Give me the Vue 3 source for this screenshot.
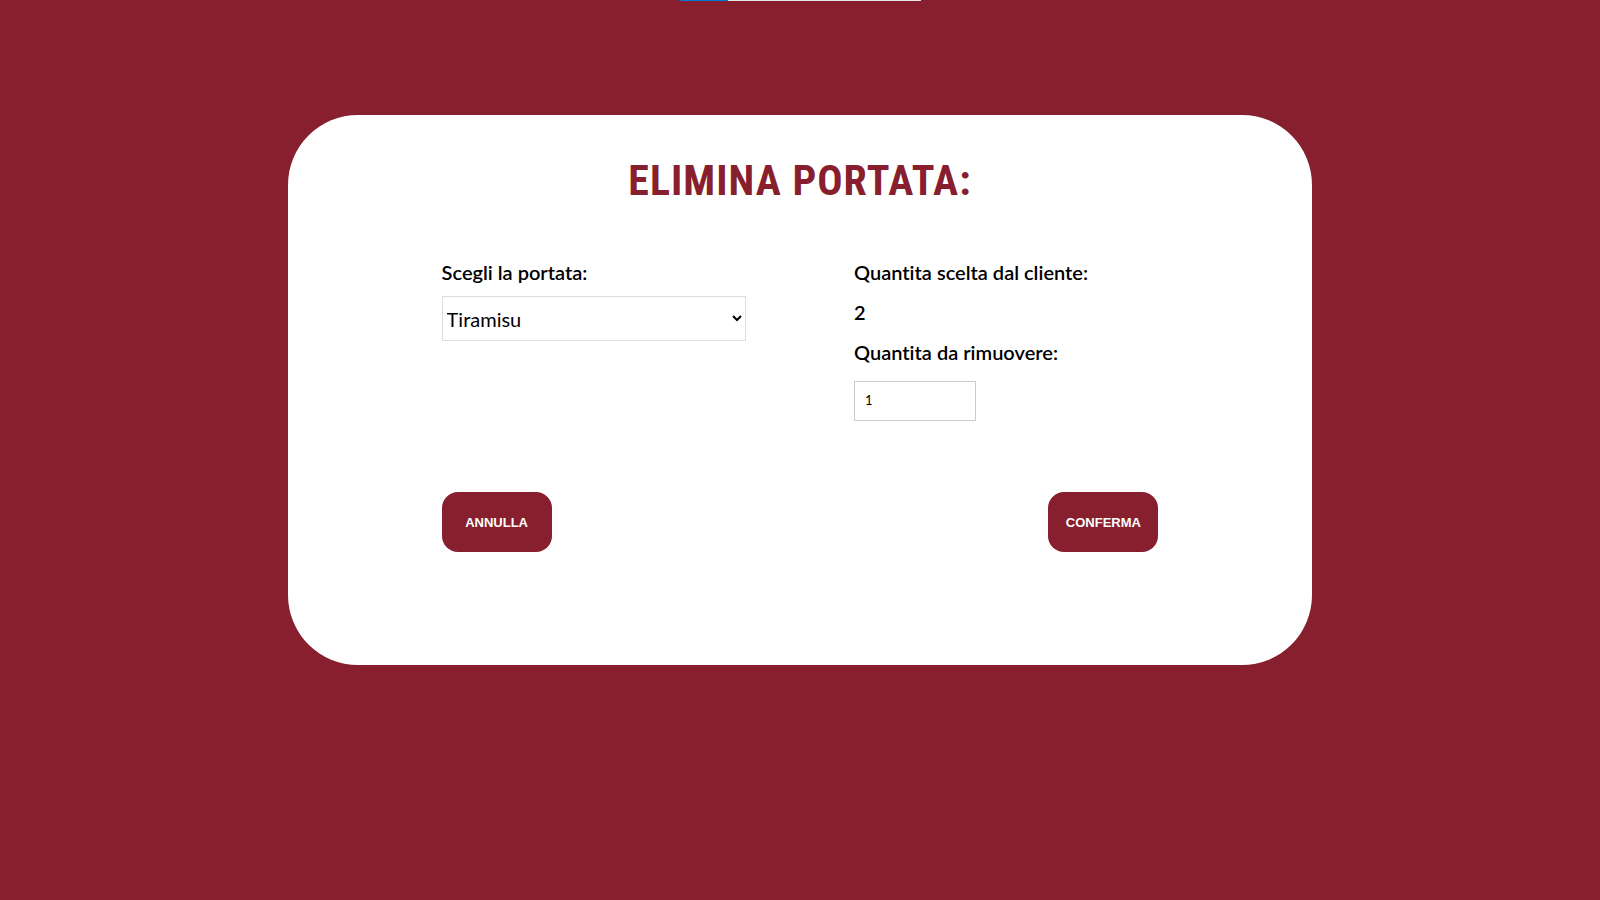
<script setup>
import { ref } from 'vue'

const dishes = ['Tiramisu']
const dish = ref('Tiramisu')
const ordered = ref(2)
const toRemove = ref(1)
</script>

<template>
  <main class="page">
    <div class="top-strip" aria-hidden="true"></div>
    <form class="card" @submit.prevent>
      <h1 class="title">ELIMINA PORTATA:</h1>
      <div class="fields">
        <div class="column">
          <label class="label" for="dish">Scegli la portata:</label>
          <select id="dish" v-model="dish" class="select">
            <option v-for="d in dishes" :key="d" :value="d">{{ d }}</option>
          </select>
        </div>
        <div class="column">
          <p class="label">Quantita scelta dal cliente:</p>
          <p class="label">{{ ordered }}</p>
          <label class="label" for="quantity">Quantita da rimuovere:</label>
          <input id="quantity" v-model="toRemove" class="quantity" type="number" min="1" :max="ordered" />
        </div>
      </div>
      <div class="actions">
        <button class="button" type="button">ANNULLA</button>
        <button class="button" type="submit">CONFERMA</button>
      </div>
    </form>
  </main>
</template>

<style>
body {
  background: #881f2e;
}
</style>

<style scoped>
.page {
  box-sizing: border-box;
  position: relative;
  min-height: 100vh;
  padding: 115px 18%;
  background: #881f2e;
  font-family: Lato, sans-serif;
  font-variant-ligatures: none;
  color: #000;
}

.top-strip {
  position: absolute;
  top: 0;
  left: 0;
  right: 0;
  width: 241px;
  height: 1px;
  margin: 0 auto;
  background: linear-gradient(to right, #0078d7 20%, #e6e6e6 20%);
}

.card {
  box-sizing: border-box;
  padding: 40px 15% 113px;
  border-radius: 70px;
  background: #fff;
}

.title {
  margin: 0;
  font-family: "Roboto Condensed", "Liberation Sans Narrow", "Liberation Sans", sans-serif;
  font-size: 42px;
  line-height: 52px;
  letter-spacing: 1px;
  text-align: center;
  color: #881f2e;
}

.fields {
  display: grid;
  grid-template-columns: 1fr 1fr;
  gap: 108px;
  margin-top: 45px;
}

.column {
  display: flex;
  flex-direction: column;
  align-items: flex-start;
}

.label {
  margin: 0;
  font-size: 20px;
  font-weight: 600;
  line-height: 40px;
}

.select {
  box-sizing: border-box;
  width: 100%;
  height: 45px;
  margin-top: 4px;
  padding-right: 1px;
  border: 1px solid #ddd;
  border-radius: 0;
  background: #fff;
  font-family: Lato, sans-serif;
  font-size: 20px;
  color: #000;
}

.quantity {
  box-sizing: border-box;
  width: 122px;
  height: 40px;
  margin-top: 9px;
  padding: 8px 10px 10px;
  border: 1px solid #ccc;
  font-family: Lato, sans-serif;
  font-size: 13px;
  color: #000;
}

.actions {
  display: flex;
  justify-content: space-between;
  margin-top: 71px;
}

.button {
  width: 110px;
  height: 60px;
  padding: 0;
  border: 0;
  border-radius: 16px;
  background: #881f2e;
  font-family: "Liberation Sans", Arial, sans-serif;
  font-size: 13px;
  font-weight: 700;
  color: #fff;
}
</style>
